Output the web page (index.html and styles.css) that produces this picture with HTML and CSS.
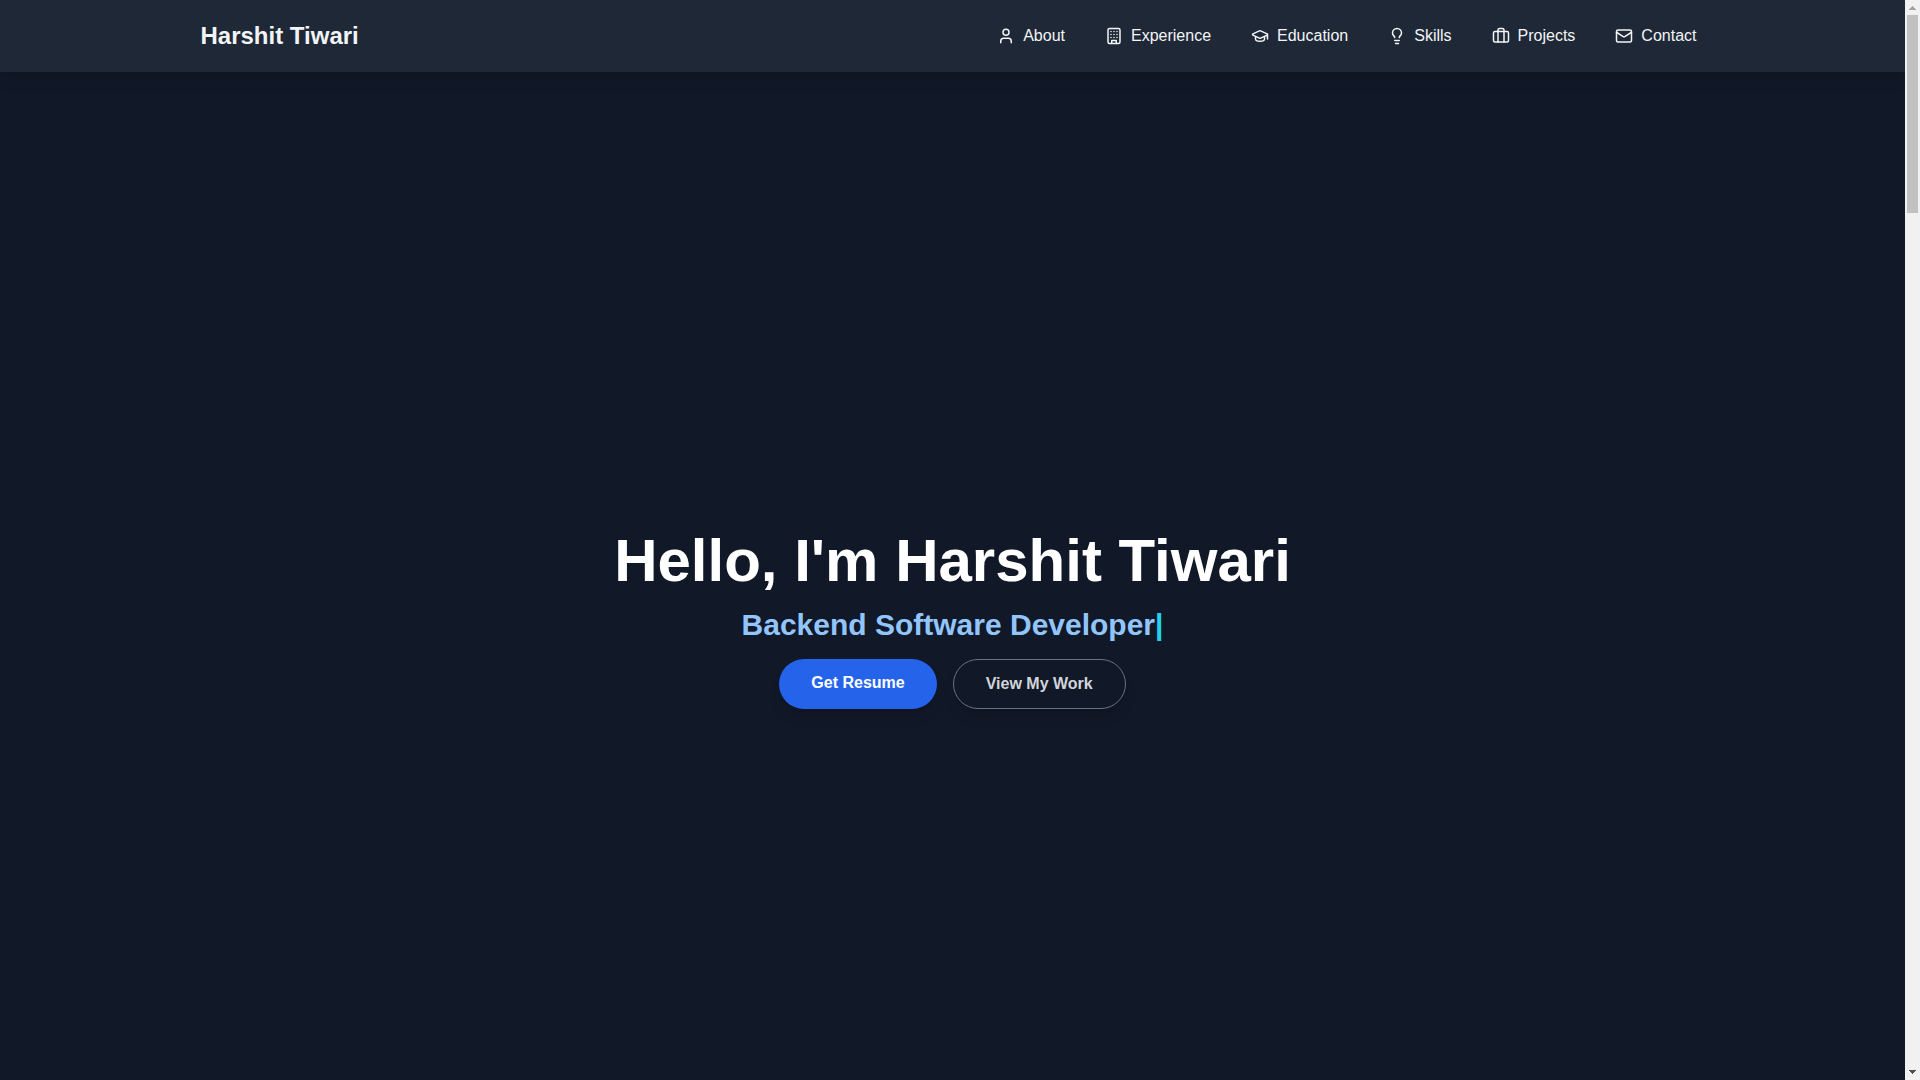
FILE: index.html
```html
<!DOCTYPE html>
<html lang="en">
<head>
<meta charset="utf-8">
<meta name="viewport" content="width=device-width, initial-scale=1">
<title>Harshit Tiwari</title>
<link rel="stylesheet" href="styles.css">
</head>
<body>
<div class="page">
  <header class="site-header">
    <div class="container">
      <a class="brand" href="#home">Harshit Tiwari</a>
      <nav class="nav" aria-label="Main">
        <a class="nav-link" href="#about">
          <svg class="icon" viewBox="0 0 24 24" aria-hidden="true"><circle cx="12" cy="7" r="4"/><path d="M19 21v-2a4 4 0 0 0-4-4H9a4 4 0 0 0-4 4v2"/></svg>
          About
        </a>
        <a class="nav-link" href="#experience">
          <svg class="icon" viewBox="0 0 24 24" aria-hidden="true"><rect x="4" y="2" width="16" height="20" rx="2"/><path d="M9 22v-4h6v4M8 6h.01M16 6h.01M12 6h.01M12 10h.01M12 14h.01M16 10h.01M16 14h.01M8 10h.01M8 14h.01"/></svg>
          Experience
        </a>
        <a class="nav-link" href="#education">
          <svg class="icon" viewBox="0 0 24 24" aria-hidden="true"><path d="M21.42 10.922a1 1 0 0 0-.019-1.838L12.83 5.18a2 2 0 0 0-1.66 0L2.6 9.08a1 1 0 0 0 0 1.832l8.57 3.908a2 2 0 0 0 1.66 0zM22 10v6M6 12.5V16a6 3 0 0 0 12 0v-3.5"/></svg>
          Education
        </a>
        <a class="nav-link" href="#skills">
          <svg class="icon" viewBox="0 0 24 24" aria-hidden="true"><path d="M15 14c.2-1 .7-1.700 1.500-2.500 1-.9 1.500-2.200 1.500-3.500A6 6 0 0 0 6 8c0 1 .2 2.200 1.500 3.500.7.7 1.300 1.500 1.500 2.500M9 18h6M10 22h4"/></svg>
          Skills
        </a>
        <a class="nav-link" href="#projects">
          <svg class="icon" viewBox="0 0 24 24" aria-hidden="true"><rect x="2" y="6" width="20" height="14" rx="2"/><path d="M16 20V4a2 2 0 0 0-2-2h-4a2 2 0 0 0-2 2v16"/></svg>
          Projects
        </a>
        <a class="nav-link" href="#contact">
          <svg class="icon" viewBox="0 0 24 24" aria-hidden="true"><rect x="2" y="4" width="20" height="16" rx="2"/><path d="m22 7-8.970 5.700a1.940 1.940 0 0 1-2.060 0L2 7"/></svg>
          Contact
        </a>
      </nav>
    </div>
  </header>
  <main class="hero" id="home">
    <h1 class="hero-title">Hello, I'm Harshit Tiwari</h1>
    <h2 class="hero-role">Backend Software Developer<span class="caret">|</span></h2>
    <div class="actions">
      <a class="button button-primary" href="#resume">Get Resume</a>
      <a class="button button-outline" href="#projects">View My Work</a>
    </div>
  </main>
</div>
<div class="scrollbar" aria-hidden="true">
  <svg class="arrow arrow-up" viewBox="0 0 7 4"><path d="M3 0h1v1h1v1h1v1h1v1H0V3h1V2h1V1h1z"/></svg>
  <div class="track"><div class="thumb"></div></div>
  <svg class="arrow arrow-down" viewBox="0 0 7 4"><path d="M0 0h7v1H6v1H5v1H4v1H3V3H2V2H1V1H0z"/></svg>
</div>
</body>
</html>
```
FILE: styles.css
```css
* {
  box-sizing: border-box;
  margin: 0;
}

body {
  display: grid;
  grid-template-columns: minmax(0, 1fr) 15px;
  min-height: 100vh;
  background: #111827;
  color: #f3f4f6;
  font: 16px/24px "Liberation Sans", Arial, sans-serif;
}

a {
  color: inherit;
  text-decoration: none;
}

.page {
  display: flex;
  flex-direction: column;
}

.site-header {
  background: #1e2836;
  box-shadow: 0 10px 15px -3px rgba(0, 0, 0, 0.1), 0 4px 6px -4px rgba(0, 0, 0, 0.1);
}

.container {
  display: flex;
  align-items: center;
  justify-content: space-between;
  max-width: 1536px;
  margin: 0 auto;
  padding: 20px 16px;
}

.brand {
  font-size: 24px;
  line-height: 32px;
  font-weight: 700;
}

.nav {
  display: flex;
  gap: 24px;
}

.nav-link {
  display: flex;
  align-items: center;
  gap: 8px;
  padding: 0 8px;
}

.icon {
  width: 18px;
  height: 18px;
  fill: none;
  stroke: currentColor;
  stroke-width: 2;
  stroke-linecap: round;
  stroke-linejoin: round;
}

.hero {
  flex: 1;
  display: flex;
  flex-direction: column;
  align-items: center;
  justify-content: center;
  padding: 88px 16px 0;
  text-align: center;
}

.hero-title {
  margin-bottom: 16px;
  color: #fff;
  font-size: 60px;
  line-height: 60px;
}

.hero-role {
  margin-bottom: 16px;
  color: #93c5fd;
  font-size: 30px;
  line-height: 36px;
}

.caret {
  color: #22d3ee;
}

.actions {
  display: flex;
  gap: 16px;
}

.button {
  padding: 12px 32px;
  border-radius: 25px;
  font-weight: 600;
  box-shadow: 0 10px 15px -3px rgba(0, 0, 0, 0.1), 0 4px 6px -4px rgba(0, 0, 0, 0.1);
}

.button-primary {
  background: #2563eb;
  color: #fff;
}

.button-outline {
  border: 1px solid #6b7280;
  color: #d1d5db;
}

.scrollbar {
  display: flex;
  flex-direction: column;
  align-items: center;
  padding: 6px 2px;
  background: #f1f1f1;
}

.arrow {
  width: 7px;
  height: 4px;
}

.arrow-up {
  fill: #a3a3a3;
}

.arrow-down {
  fill: #505050;
}

.track {
  flex: 1;
  width: 100%;
  padding: 5px 0;
}

.thumb {
  height: 198px;
  background: #c1c1c1;
}
```
